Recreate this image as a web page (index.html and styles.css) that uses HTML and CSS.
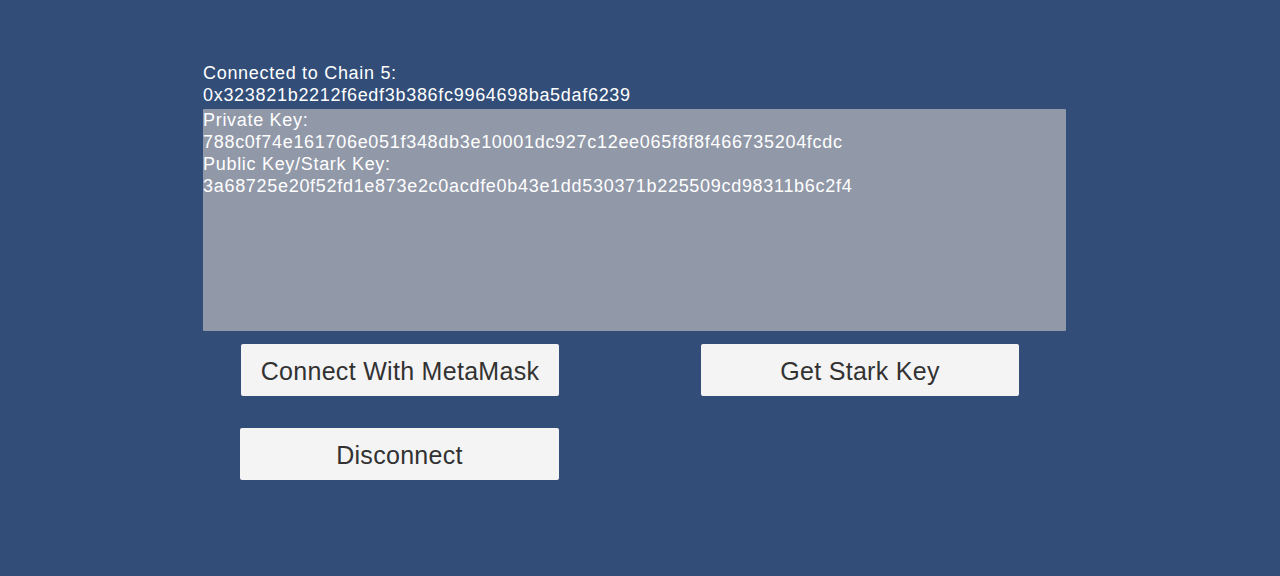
FILE: index.html
```html
<!DOCTYPE html>
<html>
<head>
<meta charset="utf-8">
<link rel="stylesheet" href="styles.css">
</head>
<body>
<div class="screen">
  <div class="content">
    <div class="status">Connected to Chain 5:<br>0x323821b2212f6edf3b386fc9964698ba5daf6239</div>
    <div class="keys">Private Key:<br>788c0f74e161706e051f348db3e10001dc927c12ee065f8f8f466735204fcdc<br>Public Key/Stark Key:<br>3a68725e20f52fd1e873e2c0acdfe0b43e1dd530371b225509cd98311b6c2f4</div>
    <div class="buttons">
      <button class="btn btn-connect">Connect With MetaMask</button>
      <button class="btn btn-stark">Get Stark Key</button>
      <button class="btn btn-disconnect">Disconnect</button>
    </div>
  </div>
</div>
</body>
</html>
```

FILE: styles.css
```css
html, body {
  margin: 0;
  padding: 0;
  background: #314d78;
}
.screen {
  width: 1280px;
  height: 576px;
  background: #314d78;
  font-family: "Liberation Sans", Arial, sans-serif;
  color: #ffffff;
  overflow: hidden;
}
.content {
  padding: 62px 0 0 203px;
  width: 863px;
}
.status {
  font-size: 18px;
  line-height: 22px;
  letter-spacing: 0.7px;
  height: 47px;
}
.keys {
  background: #9198a8;
  height: 222px;
  font-size: 18px;
  line-height: 22px;
  letter-spacing: 0.7px;
  border-radius: 1px;
}
.buttons {
  display: grid;
  grid-template-columns: 318px 318px;
  column-gap: 142px;
  row-gap: 32px;
  margin-top: 13px;
  padding-left: 38px;
}
.btn {
  height: 52px;
  background: #f4f4f4;
  border: none;
  border-radius: 2px;
  font-family: "Liberation Sans", Arial, sans-serif;
  font-size: 25px;
  letter-spacing: 0.3px;
  color: #323232;
  padding: 2px 0 0;
}
.btn-disconnect {
  margin-left: -1px;
}
```
